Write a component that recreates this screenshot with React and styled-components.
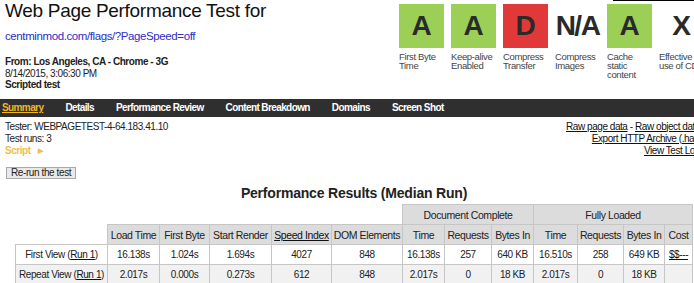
import React from 'react';
import styled, { createGlobalStyle } from 'styled-components';

const GlobalStyle = createGlobalStyle`
  body {
    margin: 0;
    overflow: hidden;
    background: #fff;
    color: #222;
    font-family: "Liberation Sans", Arial, sans-serif;
  }
`;

const grades = [
  { grade: 'A', label: 'First Byte Time', color: '#9bcf56' },
  { grade: 'A', label: 'Keep-alive Enabled', color: '#9bcf56' },
  { grade: 'D', label: 'Compress Transfer', color: '#e1393a' },
  { grade: 'N/A', label: 'Compress Images' },
  { grade: 'A', label: 'Cache static content', color: '#9bcf56' },
  { grade: 'X', label: 'Effective use of CDN' },
];

const tabs = ['Summary', 'Details', 'Performance Review', 'Content Breakdown', 'Domains', 'Screen Shot'];

const rows = [
  {
    label: 'First View',
    cells: ['16.138s', '1.024s', '1.694s', '4027', '848', '16.138s', '257', '640 KB', '16.510s', '258', '649 KB'],
    cost: '$$---',
  },
  {
    label: 'Repeat View',
    cells: ['2.017s', '0.000s', '0.273s', '612', '848', '2.017s', '0', '18 KB', '2.017s', '0', '18 KB'],
    cost: '',
  },
];

const colWidths = [92, 52, 50, 62, 60, 71, 42, 47, 42, 44, 46, 41, 28];

const headers = ['Load Time', 'First Byte', 'Start Render', 'Speed Index', 'DOM Elements', 'Time', 'Requests', 'Bytes In', 'Time', 'Requests', 'Bytes In', 'Cost'];

const Page = styled.div`
  width: 708px;
  font-size: 10px;
  line-height: 12px;
`;

const Header = styled.div`
  display: flex;
  justify-content: space-between;
  align-items: flex-start;
  height: 99px;
`;

const Info = styled.div`
  padding-left: 5px;
`;

const Title = styled.h1`
  margin: 0;
  font-size: 19px;
  line-height: 22px;
  font-weight: normal;
  letter-spacing: -0.3px;
  color: #111;
`;

const UrlLink = styled.a`
  display: block;
  margin-top: 7px;
  font-size: 11.5px;
  line-height: 14px;
  letter-spacing: -0.4px;
  color: #2d2dc8;
  text-decoration: none;
`;

const Meta = styled.div`
  margin-top: 13px;
  font-size: 10px;
  line-height: 11.5px;
  letter-spacing: -0.45px;
  color: #222;
`;

const MetaLine = styled.div`
  font-weight: ${(p) => (p.$bold ? 'bold' : 'normal')};
`;

const GradeArea = styled.div`
  display: flex;
  flex-direction: column;
  align-items: flex-end;
  padding-right: 4px;
`;

const Rule = styled.div`
  width: 95px;
  height: 1px;
  margin-right: -4px;
  margin-bottom: 3px;
  background: #000;
`;

const GradeList = styled.div`
  display: flex;
  gap: 7px;
`;

const Grade = styled.div`
  width: 45px;
`;

const GradeBox = styled.div`
  height: 44px;
  display: flex;
  align-items: center;
  justify-content: center;
  background: ${(p) => p.$color || 'transparent'};
  font-size: 28px;
  font-weight: bold;
  letter-spacing: ${(p) => (p.$wide ? '-1.5px' : '0')};
  color: #2a2a2a;
  white-space: nowrap;
`;

const GradeLabel = styled.div`
  margin-top: 4px;
  font-size: 9.5px;
  line-height: 9px;
  letter-spacing: -0.35px;
  color: #444;
  white-space: ${(p) => (p.$nowrap ? 'nowrap' : 'normal')};
`;

const Nav = styled.div`
  display: flex;
  align-items: center;
  gap: 22px;
  height: 18px;
  padding-left: 2px;
  background: #2f2f2f;
`;

const Tab = styled.a`
  font-size: 10px;
  font-weight: bold;
  letter-spacing: -0.6px;
  color: ${(p) => (p.$active ? '#f2b51f' : '#fff')};
  text-decoration: ${(p) => (p.$active ? 'underline' : 'none')};
`;

const Details = styled.div`
  display: flex;
  justify-content: space-between;
  padding: 3.5px 8px 0 5px;
  letter-spacing: -0.45px;
`;

const Script = styled.div`
  display: flex;
  align-items: center;
  gap: 7px;
  height: 12px;
  color: #efbd4e;
  font-weight: bold;
`;

const Arrow = styled.span`
  font-size: 7px;
  line-height: 12px;
`;

const LinkList = styled.div`
  text-align: right;
  white-space: nowrap;
`;

const PlainLink = styled.a`
  color: #111;
  text-decoration: underline;
`;

const ButtonRow = styled.div`
  display: flex;
  padding-left: 6px;
  margin-top: 10.5px;
`;

const Button = styled.button`
  height: 12px;
  margin: 0;
  padding: 0 4px;
  border: 1px solid #a8a8a8;
  border-radius: 0;
  background: #e9e9e9;
  font-family: "Liberation Sans", Arial, sans-serif;
  font-size: 10px;
  line-height: 10px;
  letter-spacing: -0.4px;
  color: #222;
`;

const Heading = styled.h2`
  margin: 6px 0 0;
  text-align: center;
  font-size: 14px;
  line-height: 16px;
  letter-spacing: -0.2px;
  font-weight: bold;
  color: #222;
`;

const Table = styled.table`
  margin: 3px auto 0;
  border-collapse: collapse;
  table-layout: fixed;
  width: 677px;
`;

const Cell = styled.td`
  height: 19px;
  padding: 0;
  text-align: center;
  vertical-align: middle;
  white-space: nowrap;
  overflow: hidden;
  font-size: ${(p) => (p.$head ? '10.5px' : '10px')};
  font-weight: normal;
  line-height: 12px;
  letter-spacing: -0.4px;
  color: #222;
  border: ${(p) => (p.$blank ? 'none' : '1px solid #c6c6c6')};
  background: ${(p) => (p.$blank ? 'transparent' : p.$head ? '#dcdcdc' : p.$shade ? '#f1f1f1' : '#fff')};
`;

const Under = styled.a`
  color: #111;
  text-decoration: underline;
`;

export default function App() {
  return (
    <Page>
      <GlobalStyle />
      <Header>
        <Info>
          <Title>Web Page Performance Test for</Title>
          <UrlLink href="#">centminmod.com/flags/?PageSpeed=off</UrlLink>
          <Meta>
            <MetaLine $bold>From: Los Angeles, CA - Chrome - 3G</MetaLine>
            <MetaLine>8/14/2015, 3:06:30 PM</MetaLine>
            <MetaLine $bold>Scripted test</MetaLine>
          </Meta>
        </Info>
        <GradeArea>
          <Rule />
          <GradeList>
            {grades.map((g, i) => (
              <Grade key={i}>
                <GradeBox $color={g.color} $wide={g.grade.length > 1}>{g.grade}</GradeBox>
                <GradeLabel $nowrap={i === 5}>
                  {i === 5 ? (<>Effective<br />use of CDN</>) : g.label}
                </GradeLabel>
              </Grade>
            ))}
          </GradeList>
        </GradeArea>
      </Header>

      <Nav>
        {tabs.map((t, i) => (
          <Tab key={t} href="#" $active={i === 0}>{t}</Tab>
        ))}
      </Nav>

      <Details>
        <div>
          <div>Tester: WEBPAGETEST-4-64.183.41.10</div>
          <div>Test runs: 3</div>
          <Script>Script <Arrow>▶</Arrow></Script>
        </div>
        <LinkList>
          <div><PlainLink href="#">Raw page data</PlainLink> - <PlainLink href="#">Raw object data</PlainLink></div>
          <div><PlainLink href="#">Export HTTP Archive (.har)</PlainLink></div>
          <div><PlainLink href="#">View Test Log</PlainLink></div>
        </LinkList>
      </Details>

      <ButtonRow>
        <Button type="button">Re-run the test</Button>
      </ButtonRow>

      <Heading>Performance Results (Median Run)</Heading>

      <Table>
        <colgroup>
          {colWidths.map((w, i) => <col key={i} style={{ width: w }} />)}
        </colgroup>
        <thead>
          <tr>
            <Cell as="th" $blank colSpan={6} />
            <Cell as="th" $head colSpan={3}>Document Complete</Cell>
            <Cell as="th" $head colSpan={4}>Fully Loaded</Cell>
          </tr>
          <tr>
            <Cell as="th" $blank />
            {headers.map((h, i) => (
              <Cell as="th" $head key={i}>
                {h === 'Speed Index' ? <Under href="#">{h}</Under> : h}
              </Cell>
            ))}
          </tr>
        </thead>
        <tbody>
          {rows.map((r, ri) => (
            <tr key={r.label}>
              <Cell $shade={ri === 1}>
                {r.label} (<Under href="#">Run 1</Under>)
              </Cell>
              {r.cells.map((c, ci) => (
                <Cell key={ci} $shade={ri === 1}>{c}</Cell>
              ))}
              <Cell $shade={ri === 1}>
                {r.cost && <Under href="#">{r.cost}</Under>}
              </Cell>
            </tr>
          ))}
        </tbody>
      </Table>
    </Page>
  );
}
